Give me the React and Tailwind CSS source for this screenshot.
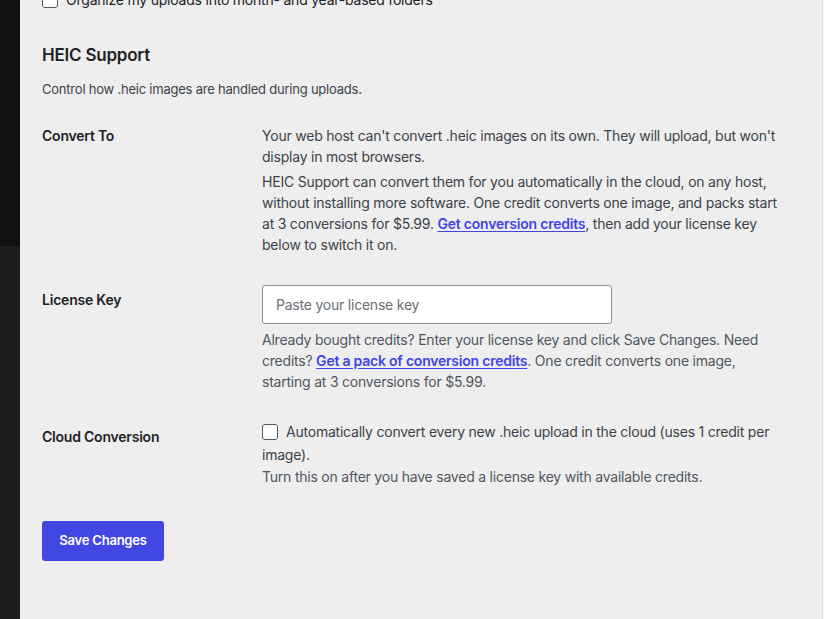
import React from "react";

const font = { fontFamily: "Inter, 'Noto Sans', sans-serif" };

const Checkbox = () => (
  <span className="inline-block w-4 h-4 shrink-0 rounded-[3px] border border-[#50575e] bg-white" />
);

const Row = ({ label, children }) => (
  <div className="flex">
    <div className="w-[220px] shrink-0 pt-[19px] pb-5 text-[14px] leading-[21px] font-semibold text-[#1d2327]">
      {label}
    </div>
    <div className="flex-1 py-[15px] text-[14px] leading-[21px] text-[#3c434a]">
      {children}
    </div>
  </div>
);

const Link = ({ children }) => (
  <a href="#" className="font-semibold text-[#3f45e6] underline underline-offset-2">
    {children}
  </a>
);

export default function App() {
  return (
    <div className="flex h-[619px] w-full overflow-hidden bg-[#eeeeee] tracking-[-0.22px]" style={font}>
      {/* admin sidebar edge */}
      <div className="flex w-5 shrink-0 flex-col">
        <div className="h-[246px] bg-[#111111]" />
        <div className="flex-1 bg-[#1d1d1d]" />
      </div>

      <div className="flex-1 pl-[22px] pr-[8px]">
        <div className="-mt-[11px] flex items-center gap-2 text-[14px] leading-[21px] text-[#1d2327]">
          <Checkbox />
          <span>Organize my uploads into month- and year-based folders</span>
        </div>

        <h2 className="mt-[33px] text-[17px] leading-6 font-semibold text-[#1d2327]">HEIC Support</h2>
        <p className="mt-3 text-[13px] leading-5 text-[#3c434a]">
          Control how .heic images are handled during uploads.
        </p>

        <div className="mt-[7px]">
          <Row label="Convert To">
            <p className="mt-1">
              Your web host can't convert .heic images on its own. They will upload, but won't
              <br />
              display in most browsers.
            </p>
            <p className="mt-1">
              HEIC Support can convert them for you automatically in the cloud, on any host,
              <br />
              without installing more software. One credit converts one image, and packs start
              <br />
              at 3 conversions for $5.99. <Link>Get conversion credits</Link>, then add your license key
              <br />
              below to switch it on.
            </p>
          </Row>

          <Row label="License Key">
            <input
              type="text"
              placeholder="Paste your license key"
              className="block h-[39px] w-[350px] rounded-[3px] border border-[#8c8f94] bg-white px-[13px] text-[14px] text-[#2c3338] placeholder:text-[#6b6f75] outline-none"
            />
            <p className="mt-[5px] text-[#50575e]">
              Already bought credits? Enter your license key and click Save Changes. Need
              <br />
              credits? <Link>Get a pack of conversion credits</Link>. One credit converts one image,
              <br />
              starting at 3 conversions for $5.99.
            </p>
          </Row>

          <Row label="Cloud Conversion">
            <label className="block leading-5">
              <span className="mr-2 inline-block align-[-3px]">
                <Checkbox />
              </span>
              Automatically convert every new .heic upload in the cloud (uses 1 credit per
              <br />
              image).
            </label>
            <p className="mt-px text-[#50575e]">
              Turn this on after you have saved a license key with available credits.
            </p>
          </Row>
        </div>

        <button className="mt-[19px] h-10 w-[122px] rounded-[3px] bg-[#4247e3] text-[13px] font-semibold text-white">
          Save Changes
        </button>
      </div>

      <div className="w-px bg-[#dcdcde]" />
      <div className="w-px bg-[#f9f9f9]" />
    </div>
  );
}
